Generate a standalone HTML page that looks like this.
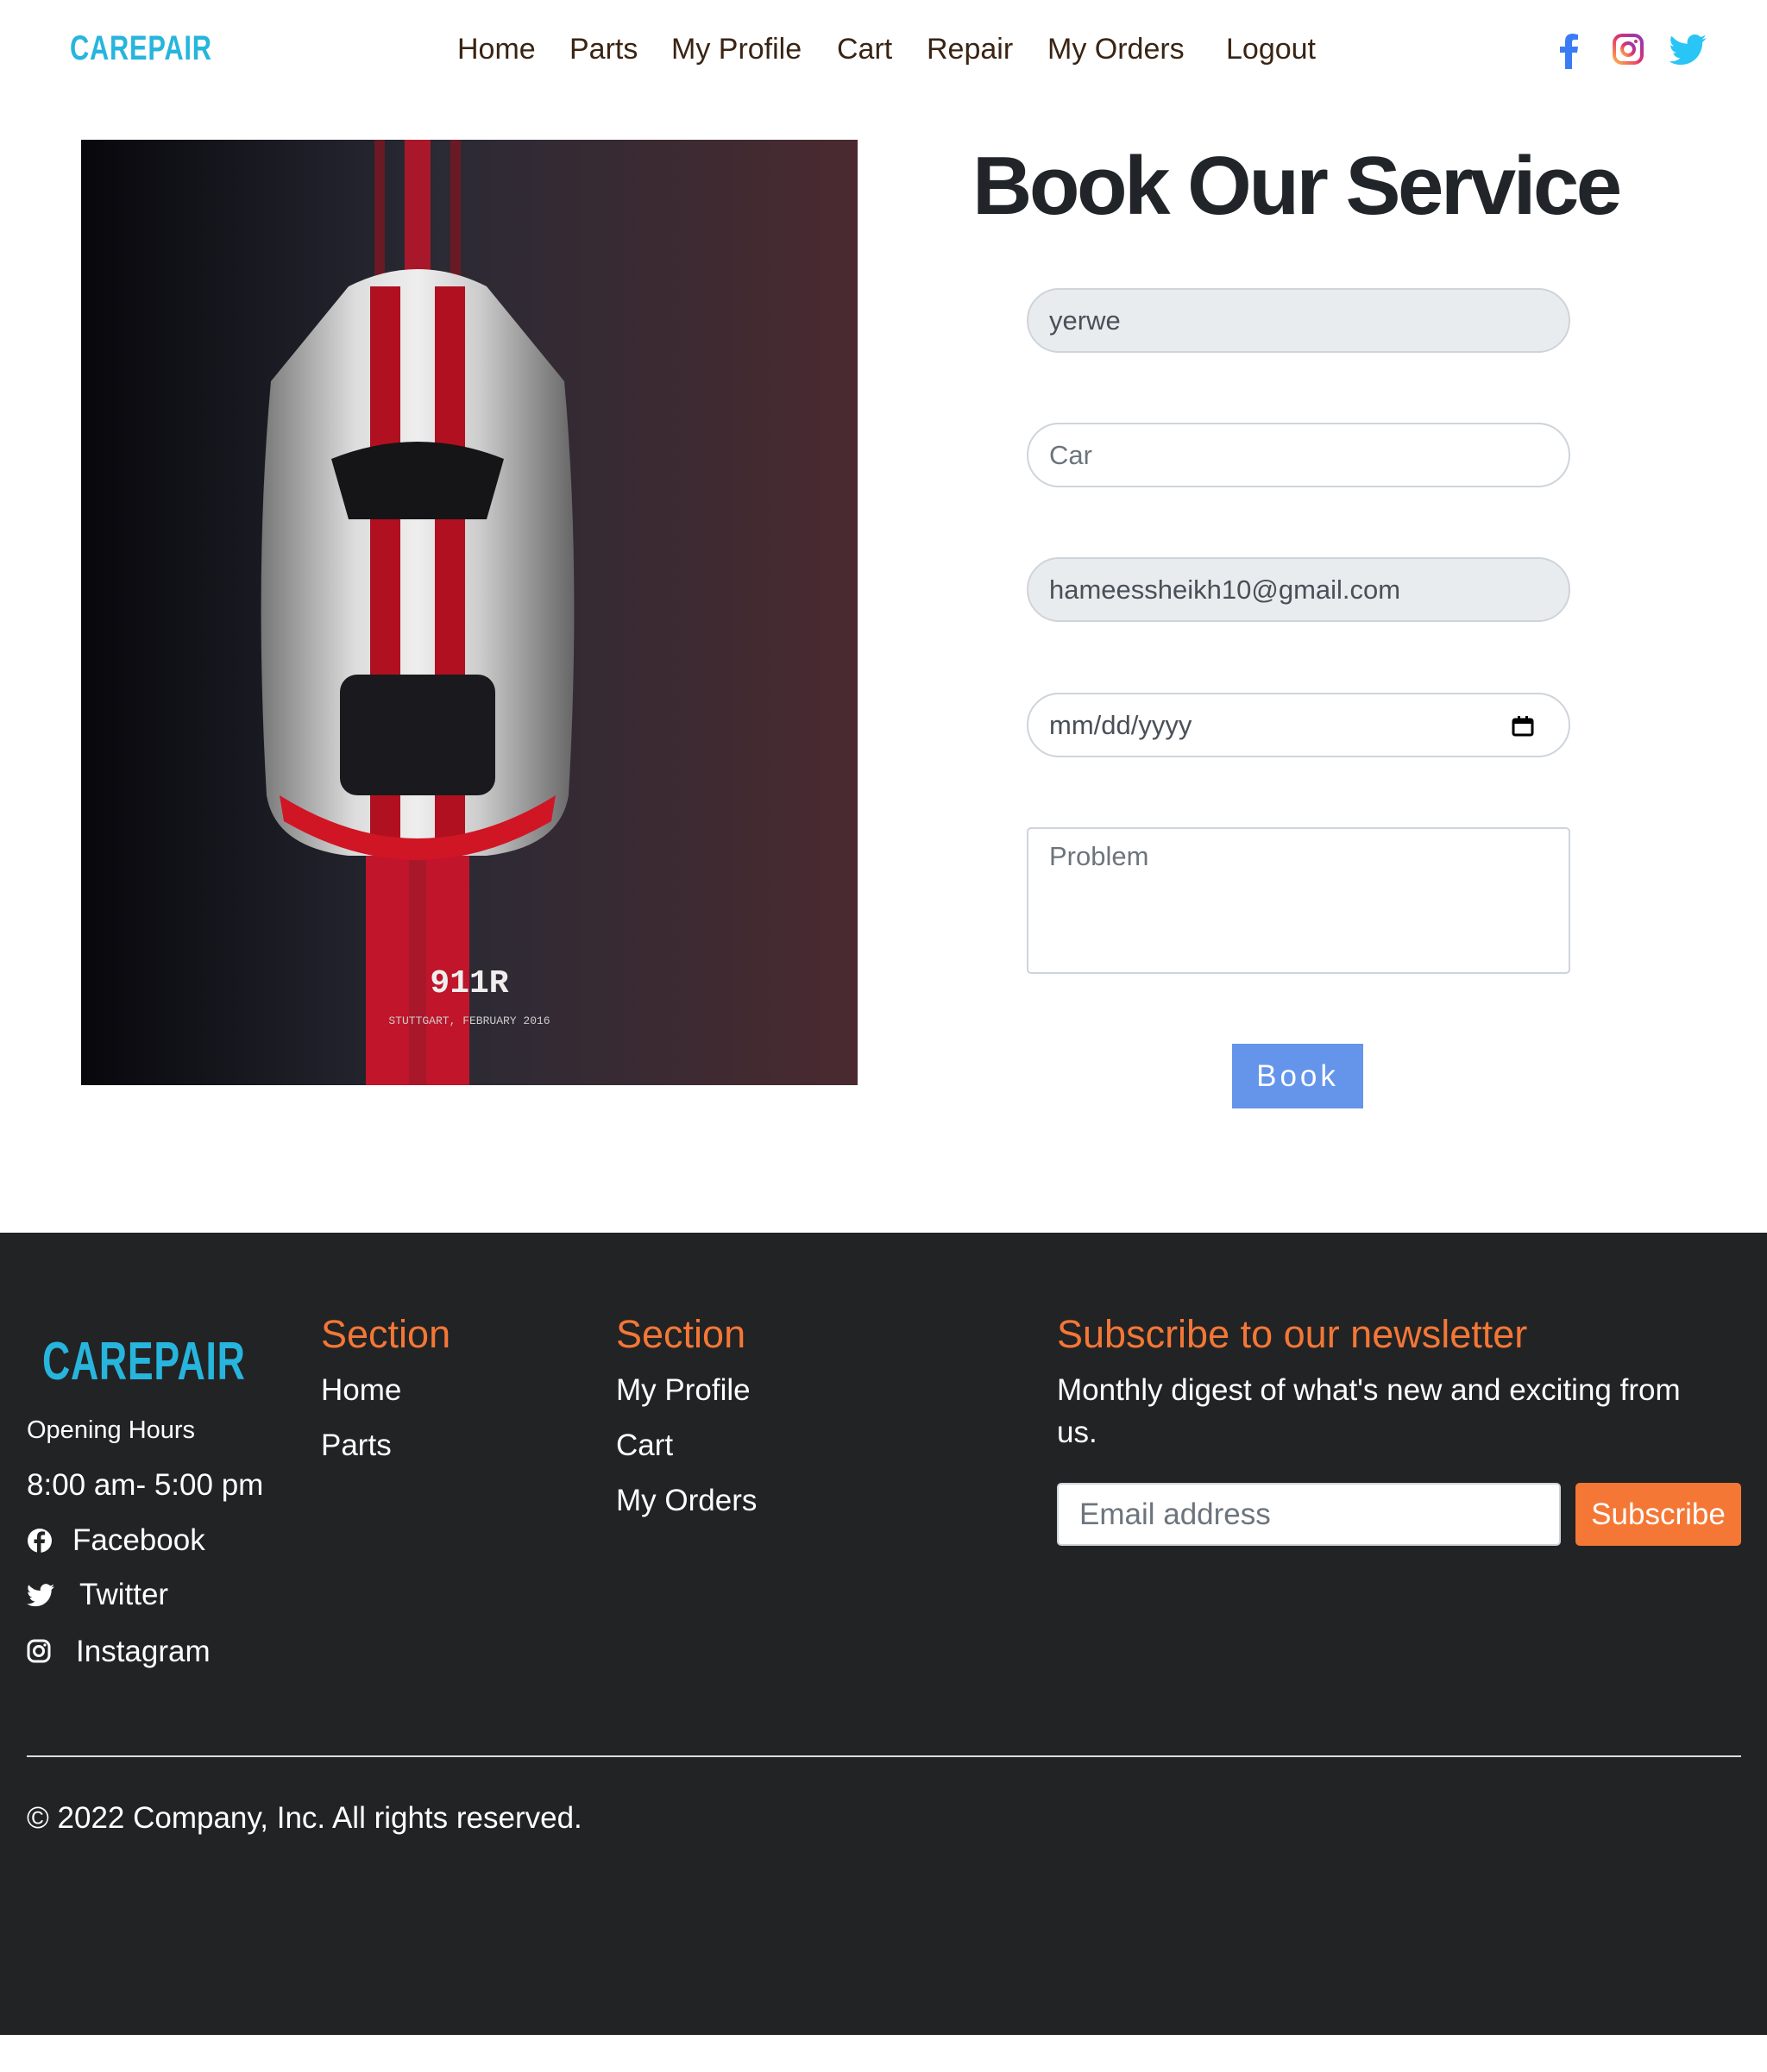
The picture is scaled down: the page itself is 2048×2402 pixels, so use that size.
<!DOCTYPE html>
<html><head><meta charset="utf-8"><style>
*{box-sizing:border-box;margin:0;padding:0}
body{width:2048px;height:2402px;background:#fff;font-family:"Liberation Sans",sans-serif;position:relative;overflow:hidden}
.a{position:absolute;white-space:nowrap}
.logo{font-family:"Liberation Sans",sans-serif;font-weight:bold;color:#27b5dd;transform:scaleX(0.72);transform-origin:left center;letter-spacing:1px}
.nav{top:33px;font-size:34px;color:#3a2414;line-height:48px}
.inp{position:absolute;left:1190px;width:630px;height:75px;border:2px solid #ced4da;border-radius:38px;font-size:31px;color:#495057;padding-left:24px;line-height:71px}
.ft{color:#fff;font-size:35px;line-height:48px}
.or{color:#f47735;font-size:45px;line-height:56px}
</style></head><body>
<div class="a logo" style="left:81px;top:30px;font-size:40px;line-height:52px;transform:scaleX(0.77)">CAREPAIR</div>
<div class="a nav" style="left:530px">Home</div>
<div class="a nav" style="left:660px">Parts</div>
<div class="a nav" style="left:778px">My Profile</div>
<div class="a nav" style="left:970px">Cart</div>
<div class="a nav" style="left:1074px">Repair</div>
<div class="a nav" style="left:1214px">My Orders</div>
<div class="a nav" style="left:1421px">Logout</div>
<svg class="a" style="left:1806px;top:38px" width="24" height="42" viewBox="0 0 24 42"><path d="M16 42V23h6l1-7h-7v-5c0-2 1-3 3-3h4V2c-2 0-4-1-6-1-6 0-9 3-9 9v6H2v7h6v19z" fill="#3b7cf5"/></svg>
<svg class="a" style="left:1868px;top:38px" width="38" height="38" viewBox="0 0 38 38"><defs><linearGradient id="ig" x1="0" y1="1" x2="1" y2="0"><stop offset="0" stop-color="#fdb34b"/><stop offset=".5" stop-color="#e4306c"/><stop offset="1" stop-color="#8a3ab9"/></linearGradient></defs><rect x="3" y="3" width="32" height="32" rx="9" fill="none" stroke="url(#ig)" stroke-width="4"/><circle cx="19" cy="19" r="7" fill="none" stroke="url(#ig)" stroke-width="4"/><circle cx="28" cy="10" r="2" fill="#c13584"/></svg>
<svg class="a" style="left:1934px;top:40px" width="44" height="36" viewBox="0 0 24 20"><path d="M24 2.3c-.9.4-1.8.7-2.8.8 1-.6 1.8-1.6 2.2-2.7-1 .6-2 1-3.1 1.2A4.9 4.9 0 0 0 11.9 6 14 14 0 0 1 1.7.9a4.9 4.9 0 0 0 1.5 6.6c-.8 0-1.6-.3-2.200-.6 0 2.4 1.7 4.4 3.9 4.8-.7.2-1.5.2-2.2.1.6 2 2.4 3.4 4.6 3.4A9.9 9.9 0 0 1 0 17.3 14 14 0 0 0 7.5 19.5c9.1 0 14-7.5 14-14v-.6c1-.7 1.8-1.600 2.5-2.6z" fill="#29c5f6"/></svg>

<svg class="a" style="left:94px;top:162px" width="900" height="1096" viewBox="0 0 900 1096">
<defs><linearGradient id="bg" x1="0" x2="1"><stop offset="0" stop-color="#07070c"/><stop offset=".45" stop-color="#2a2a35"/><stop offset="1" stop-color="#4a2a30"/></linearGradient>
<linearGradient id="body" x1="0" x2="1"><stop offset="0" stop-color="#777"/><stop offset=".3" stop-color="#ddd"/><stop offset=".5" stop-color="#eee"/><stop offset=".7" stop-color="#ccc"/><stop offset="1" stop-color="#666"/></linearGradient></defs>
<rect width="900" height="1096" fill="url(#bg)"/>
<rect x="375" y="0" width="30" height="1096" fill="#a8182a"/>
<rect x="340" y="0" width="12" height="1096" fill="#6a1a25"/>
<rect x="428" y="0" width="12" height="1096" fill="#6a1a25"/>
<rect x="330" y="780" width="50" height="316" fill="#c0152a"/>
<rect x="400" y="780" width="50" height="316" fill="#c0152a"/>
<path d="M310 170 Q390 130 470 170 L560 280 Q580 500 565 760 Q555 820 470 830 L310 830 Q225 820 215 760 Q200 500 220 280 Z" fill="url(#body)"/>
<rect x="335" y="170" width="35" height="650" fill="#b0101f"/>
<rect x="410" y="170" width="35" height="650" fill="#b0101f"/>
<path d="M290 370 Q390 330 490 370 L470 440 L310 440 Z" fill="#151518"/>
<rect x="300" y="620" width="180" height="140" rx="20" fill="#1a1a1e"/>
<path d="M230 760 Q390 860 550 760 L545 790 Q390 880 235 790 Z" fill="#d01525"/>
<text x="450" y="988" text-anchor="middle" fill="#eee" font-size="38" font-weight="bold" font-family="Liberation Mono">911R</text>
<text x="450" y="1025" text-anchor="middle" fill="#ccc" font-size="13" font-family="Liberation Mono">STUTTGART, FEBRUARY 2016</text>
</svg>

<div class="a" style="left:1127px;top:156px;font-size:96px;font-weight:bold;color:#212529;letter-spacing:-3.5px;line-height:120px">Book Our Service</div>
<div class="inp" style="top:334px;background:#e9ecef">yerwe</div>
<div class="inp" style="top:490px;color:#6c757d">Car</div>
<div class="inp" style="top:646px;background:#e9ecef">hameessheikh10@gmail.com</div>
<div class="inp" style="top:803px">mm/dd/yyyy
<svg style="position:absolute;right:40px;top:24px" width="26" height="26" viewBox="0 0 26 26"><rect x="2" y="5" width="22" height="18" rx="2" fill="none" stroke="#000" stroke-width="3"/><rect x="2" y="5" width="22" height="5" fill="#000"/><rect x="7" y="1" width="3" height="6" fill="#000"/><rect x="16" y="1" width="3" height="6" fill="#000"/></svg></div>
<div class="inp" style="top:959px;height:170px;border-radius:5px;line-height:40px;padding-top:12px;color:#6c757d">Problem</div>
<div class="a" style="left:1428px;top:1210px;width:152px;height:75px;background:#6495ea;color:#fff;font-size:35px;letter-spacing:4px;text-align:center;line-height:75px">Book</div>

<div class="a" style="left:0;top:1429px;width:2048px;height:930px;background:#222325"></div>
<div class="a logo" style="left:49px;top:1548px;font-size:62px;line-height:62px">CAREPAIR</div>
<div class="a ft" style="left:31px;top:1634px;font-size:29px">Opening Hours</div>
<div class="a ft" style="left:31px;top:1698px">8:00 am- 5:00 pm</div>
<svg class="a" style="left:31px;top:1771px" width="30" height="30" viewBox="0 0 30 30"><circle cx="15" cy="15" r="14" fill="#fff"/><path d="M16.5 30V18h4l.6-4.5h-4.6v-3c0-1.2.4-2 2-2h2.6V4.6c-.5 0-1.9-.2-3.4-.2-3.4 0-5.7 2-5.7 5.8v3.3H8.5V18H12v12z" fill="#222325"/></svg>
<div class="a ft" style="left:84px;top:1762px">Facebook</div>
<svg class="a" style="left:31px;top:1836px" width="32" height="27" viewBox="0 0 24 20"><path d="M24 2.3c-.9.4-1.8.7-2.8.8 1-.6 1.8-1.6 2.2-2.7-1 .6-2 1-3.1 1.2A4.9 4.9 0 0 0 11.9 6 14 14 0 0 1 1.7.9a4.9 4.9 0 0 0 1.5 6.6c-.8 0-1.6-.3-2.2-.6 0 2.4 1.7 4.4 3.9 4.8-.7.2-1.5.2-2.2.1.6 2 2.4 3.4 4.6 3.4A9.9 9.9 0 0 1 0 17.3 14 14 0 0 0 7.5 19.5c9.1 0 14-7.5 14-14v-.6c1-.7 1.8-1.6 2.5-2.6z" fill="#fff"/></svg>
<div class="a ft" style="left:92px;top:1825px">Twitter</div>
<svg class="a" style="left:31px;top:1900px" width="28" height="28" viewBox="0 0 28 28"><rect x="2" y="2" width="24" height="24" rx="7" fill="none" stroke="#fff" stroke-width="3"/><circle cx="14" cy="14" r="5.5" fill="none" stroke="#fff" stroke-width="3"/><circle cx="21" cy="7" r="1.6" fill="#fff"/></svg>
<div class="a ft" style="left:88px;top:1891px">Instagram</div>

<div class="a or" style="left:372px;top:1519px">Section</div>
<div class="a ft" style="left:372px;top:1588px">Home</div>
<div class="a ft" style="left:372px;top:1652px">Parts</div>
<div class="a or" style="left:714px;top:1519px">Section</div>
<div class="a ft" style="left:714px;top:1588px">My Profile</div>
<div class="a ft" style="left:714px;top:1652px">Cart</div>
<div class="a ft" style="left:714px;top:1716px">My Orders</div>
<div class="a or" style="left:1225px;top:1519px">Subscribe to our newsletter</div>
<div class="a ft" style="left:1225px;top:1588px">Monthly digest of what's new and exciting from</div>
<div class="a ft" style="left:1225px;top:1637px">us.</div>
<div class="a" style="left:1225px;top:1719px;width:584px;height:73px;background:#fff;border:2px solid #ced4da;border-radius:5px;font-size:35px;color:#6c757d;padding-left:24px;line-height:69px">Email address</div>
<div class="a" style="left:1826px;top:1719px;width:192px;height:73px;background:#f47735;border-radius:5px;font-size:35px;color:#fff;text-align:center;line-height:73px">Subscribe</div>
<div class="a" style="left:31px;top:2035px;width:1987px;height:2px;background:#ddd"></div>
<div class="a ft" style="left:31px;top:2084px">© 2022 Company, Inc. All rights reserved.</div>
</body></html>
